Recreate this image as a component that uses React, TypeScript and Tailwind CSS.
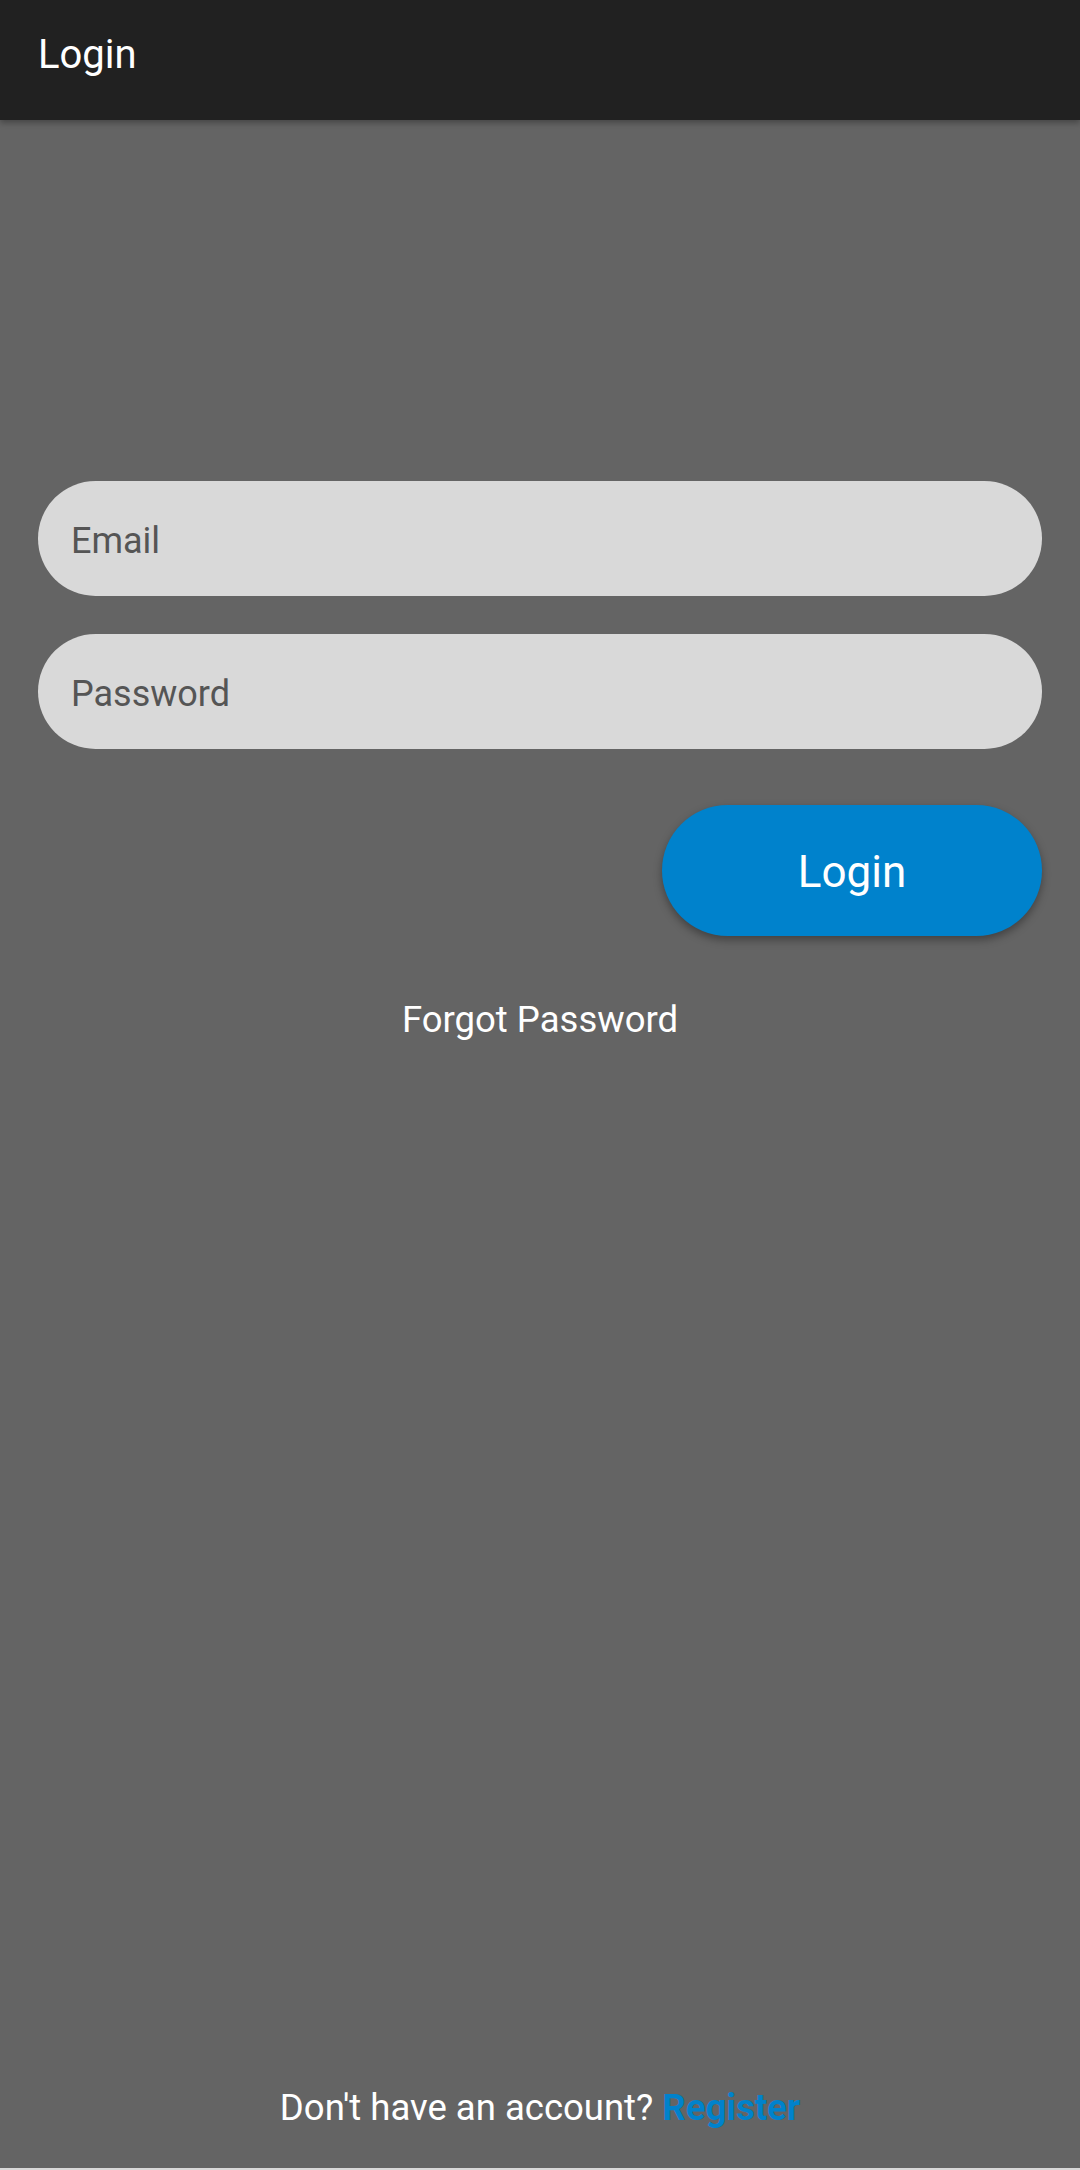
export default function App() {
  return (
    <div
      className="flex h-[2170px] w-[1080px] flex-col bg-[#646464]"
      style={{ fontFamily: "Roboto, 'Noto Sans', sans-serif" }}
    >
      <header className="relative z-10 flex h-[120px] shrink-0 items-center bg-[#212121] px-[38px] pb-[10px] shadow-[0_3px_6px_rgba(0,0,0,0.3)]">
        <h1 className="text-[40px] font-normal leading-none text-white">Login</h1>
      </header>

      <main className="flex flex-1 flex-col px-[38px] pt-[361px]">
        <div className="flex h-[115px] items-center rounded-full bg-[#d9d9d9] px-[33px] pt-[5px]">
          <span className="text-[36px] text-[#555555]">Email</span>
        </div>
        <div className="mt-[38px] flex h-[115px] items-center rounded-full bg-[#d9d9d9] px-[33px] pt-[5px]">
          <span className="text-[36px] text-[#555555]">Password</span>
        </div>

        <div className="mt-[56px] flex justify-end">
          <button className="flex h-[131px] w-[380px] items-center justify-center rounded-full bg-[#0082cc] pt-[2px] text-[44px] text-white shadow-[0_4px_8px_rgba(0,0,0,0.35)]">
            Login
          </button>
        </div>

        <p className="mt-[66px] text-center text-[36.5px] leading-none text-white">Forgot Password</p>

        <div className="flex-1" />

        <p className="mb-[42px] text-center text-[36.5px] leading-none text-white">
          Don't have an account? <span className="font-bold text-[#0082cc]">Register</span>
        </p>
      </main>
      <div className="h-[2px] shrink-0 bg-[#d8d8d8]" />
    </div>
  );
}
